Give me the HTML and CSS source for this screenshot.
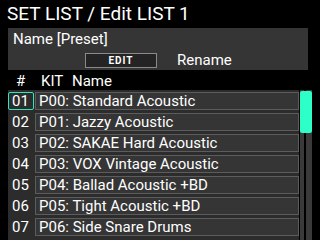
FILE: index.html
```html
<!DOCTYPE html>
<html lang="en">
  <head>
    <meta charset="UTF-8" />
    <meta name="viewport" content="width=device-width, initial-scale=1.0" />
    <title>Set List</title>
    <link rel="stylesheet" href="styles.css">
  </head>
  <body>
    <h1 class="title">SET LIST / Edit LIST 1</h1>
    <div class="name-panel">
      <div class="name-label">Name [Preset]</div>
      <div class="name-actions">
        <button type="button" class="edit-btn">EDIT</button>
        <span class="rename">Rename</span>
      </div>
    </div>
    <div class="list-head">
      <span class="col-num">#</span>
      <span class="col-kit">KIT</span>
      <span class="col-name">Name</span>
    </div>
    <div class="list">
      <div class="rows">
        <div class="row">
          <div class="num selected">01</div>
          <div class="kit">P00: Standard Acoustic</div>
        </div>
        <div class="row">
          <div class="num">02</div>
          <div class="kit">P01: Jazzy Acoustic</div>
        </div>
        <div class="row">
          <div class="num">03</div>
          <div class="kit">P02: SAKAE Hard Acoustic</div>
        </div>
        <div class="row">
          <div class="num">04</div>
          <div class="kit">P03: VOX Vintage Acoustic</div>
        </div>
        <div class="row">
          <div class="num">05</div>
          <div class="kit">P04: Ballad Acoustic +BD</div>
        </div>
        <div class="row">
          <div class="num">06</div>
          <div class="kit">P05: Tight Acoustic +BD</div>
        </div>
        <div class="row">
          <div class="num">07</div>
          <div class="kit">P06: Side Snare Drums</div>
        </div>
      </div>
      <div class="scroll">
        <div class="thumb"></div>
      </div>
    </div>
  </body>
</html>
```

FILE: styles.css
```css
/* Basic styling */
body {
  font-family: Roboto, "Liberation Sans", sans-serif;
  background-color: #000;
  color: #fff;
  margin: 0;
  padding: 0;
  width: 320px;
  height: 240px;
  overflow: hidden;
}
.title {
  margin: 0;
  padding-left: 7px;
  height: 28px;
  font-size: 19px;
  font-weight: normal;
  line-height: 28px;
}
.name-panel {
  margin: 0 12px 0 8px;
  height: 42px;
  background-color: #353535;
  box-sizing: border-box;
  padding: 2px 0 0 5px;
}
.name-label {
  font-size: 15px;
  line-height: 19px;
}
.name-actions {
  display: flex;
  align-items: center;
  margin-top: 3px;
  padding-left: 72px;
}
.edit-btn {
  width: 72px;
  height: 15px;
  padding: 0;
  border: 1px solid #8a8a8a;
  background-color: #242424;
  color: #fff;
  font-family: Roboto, "Liberation Sans", sans-serif;
  font-size: 10px;
  font-weight: bold;
  letter-spacing: 1px;
  line-height: 13px;
}
.rename {
  margin-left: 20px;
  font-size: 15px;
  line-height: 16px;
}
.list-head {
  display: flex;
  height: 20px;
  font-size: 15px;
  line-height: 22px;
}
.col-num {
  width: 16px;
  padding-left: 16px;
}
.col-kit {
  width: 31px;
  padding-left: 9px;
}
.list {
  display: flex;
  gap: 1px;
  height: 150px;
  padding-left: 8px;
}
.rows {
  width: 291px;
  background-color: #2c2c2c;
  display: flex;
  flex-direction: column;
  gap: 3px;
  padding-top: 2px;
}
.row {
  display: flex;
  height: 18px;
  gap: 1px;
  font-size: 15px;
  line-height: 16px;
}
.num {
  width: 26px;
  box-sizing: border-box;
  border: 1px solid transparent;
  border-radius: 2px;
  padding-left: 3px;
}
.num.selected {
  border-color: #2fe6bf;
}
.kit {
  flex: 1;
  box-sizing: border-box;
  border: 1px solid #5c5c5c;
  background-color: #353535;
  padding-left: 3px;
}
.scroll {
  width: 12px;
  background: linear-gradient(to right, #3a3a3a 4px, #000 4px, #000 6px, #3a3a3a 6px);
}
.thumb {
  height: 42px;
  margin-top: 1px;
  border-radius: 2px;
  background-color: #2effc8;
}
```
